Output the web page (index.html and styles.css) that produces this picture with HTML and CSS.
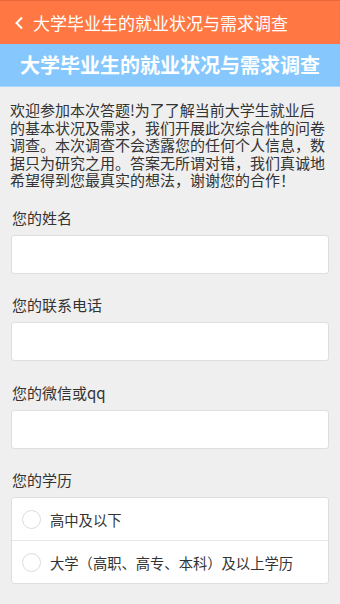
FILE: index.html
```html
<!DOCTYPE html>
<html>
<head>
    <meta charset="utf-8">
    <title>大学毕业生的就业状况与需求调查</title>
    <link rel="stylesheet" href="styles.css">
</head>
<body>
    <div class="topbar">
        <svg class="back" width="10" height="14" viewBox="0 0 10 14">
            <path d="M8 1.5 L2.5 7 L8 12.5" fill="none" stroke="#fff" stroke-width="2"/>
        </svg>
        <span class="topbar-title">大学毕业生的就业状况与需求调查</span>
    </div>

    <div class="banner">大学毕业生的就业状况与需求调查</div>

    <div class="survey">
        <p class="intro">欢迎参加本次答题!为了了解当前大学生就业后的基本状况及需求，我们开展此次综合性的问卷调查。本次调查不会透露您的任何个人信息，数据只为研究之用。答案无所谓对错，我们真诚地希望得到您最真实的想法，谢谢您的合作！</p>

        <div class="field">
            <div class="label">您的姓名</div>
            <div class="input"></div>
        </div>

        <div class="field">
            <div class="label">您的联系电话</div>
            <div class="input"></div>
        </div>

        <div class="field">
            <div class="label">您的微信或qq</div>
            <div class="input"></div>
        </div>

        <div class="field">
            <div class="label">您的学历</div>
            <div class="options">
                <div class="option"><span class="radio"></span>高中及以下</div>
                <div class="option"><span class="radio"></span>大学（高职、高专、本科）及以上学历</div>
            </div>
        </div>
    </div>
</body>
</html>
```

FILE: styles.css
```css
body {
    margin: 0;
    background: #efefef;
    color: #333;
    font-family: "Noto Sans CJK SC", "Noto Sans", sans-serif;
}

.topbar {
    height: 43px;
    background: #ff7843;
    border-top: 1px solid #e8683a;
    display: flex;
    align-items: center;
    color: #fff;
}

.back {
    margin-left: 14px;
    margin-right: 9px;
}

.topbar-title {
    font-size: 17px;
}

.banner {
    height: 42px;
    background: #86c8fe;
    border-bottom: 1px solid #a9d6fb;
    color: #fff;
    font-size: 20px;
    font-weight: bold;
    line-height: 42px;
    text-align: center;
}

.survey {
    padding: 0 11px 0 11px;
}

.intro {
    margin: 14px 0 19px -1px;
    font-size: 15px;
    line-height: 17.6px;
    width: 318px;
}

.field {
    margin-bottom: 21.5px;
}

.label {
    font-size: 15px;
    line-height: 20px;
    margin-bottom: 7px;
    padding-left: 1px;
}

.input {
    height: 37px;
    background: #fff;
    border: 1px solid #dedede;
    border-radius: 3px;
}

.options {
    background: #fff;
    border: 1px solid #dedede;
    border-radius: 3px;
}

.option {
    height: 42px;
    display: flex;
    align-items: center;
    font-size: 14.3px;
}

.option + .option {
    border-top: 1px solid #e6e6e6;
}

.radio {
    width: 17px;
    height: 17px;
    border: 1px solid #dcdcdc;
    border-radius: 50%;
    margin-left: 10px;
    margin-right: 9px;
}
```
